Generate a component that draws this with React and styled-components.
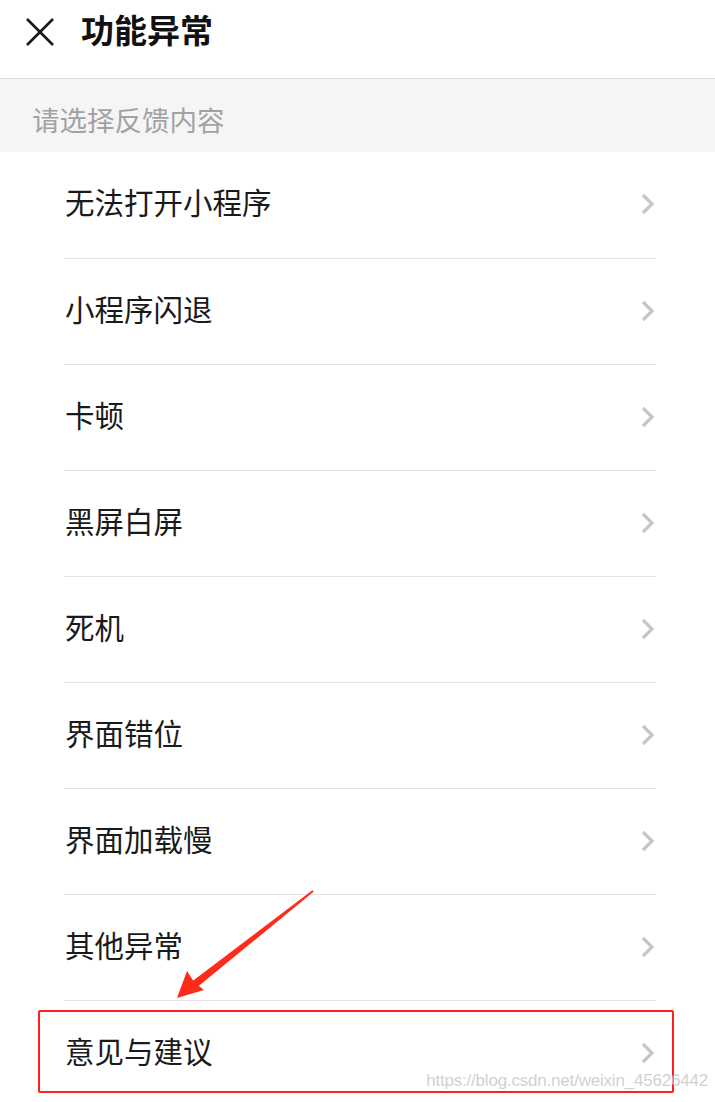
import React from "react";
import styled, { createGlobalStyle } from "styled-components";

const Global = createGlobalStyle`
  html, body { margin: 0; padding: 0; background: #fff; }
  body { font-family: "Noto Sans CJK SC", "Noto Sans", sans-serif; }
`;

const Page = styled.div`
  position: relative;
  width: 715px;
  height: 1102px;
  overflow: hidden;
  background: #fff;
`;

const Header = styled.div`
  height: 78px;
  display: flex;
  align-items: center;
  border-bottom: 1px solid #dcdcdc;
  box-sizing: content-box;
`;

const CloseBtn = styled.div`
  width: 28px;
  height: 28px;
  margin-left: 26px;
  margin-right: 27px;
  margin-top: -14px;
  display: flex;
`;

const Title = styled.h1`
  margin: 0;
  margin-top: -20px;
  font-size: 33px;
  font-weight: 700;
  color: #111;
  letter-spacing: 0;
`;

const Section = styled.div`
  height: 73px;
  background: #f5f5f5;
  display: flex;
  align-items: center;
  padding-left: 32px;
`;

const SectionLabel = styled.span`
  font-size: 27.5px;
  color: #a2a2a2;
  margin-top: 6px;
`;

const List = styled.div`
  display: flex;
  flex-direction: column;
`;

const Row = styled.div`
  height: 106px;
  margin: 0 59px 0 64px;
  display: flex;
  align-items: center;
  justify-content: space-between;
  border-top: ${(p) => (p.$first ? "none" : "1px solid #e4e4e4")};
  box-sizing: border-box;
`;

const RowText = styled.span`
  font-size: 29.5px;
  color: #1a1a1a;
  margin-left: 1px;
  margin-top: -8px;
`;

const Chevron = styled.svg`
  width: 16px;
  height: 24px;
  margin-top: -2px;
`;

const Highlight = styled.div`
  position: absolute;
  left: 38px;
  top: 1010px;
  width: 636px;
  height: 83px;
  border: 2.5px solid #ff1f1f;
  border-radius: 2px;
  box-sizing: border-box;
`;

const ArrowSvg = styled.svg`
  position: absolute;
  left: 0;
  top: 0;
  width: 715px;
  height: 1102px;
  pointer-events: none;
`;

const Watermark = styled.span`
  position: absolute;
  right: 7px;
  top: 1071px;
  font-family: "Liberation Sans", Arial, sans-serif;
  font-size: 17px;
  color: rgba(200, 200, 200, 0.85);
  letter-spacing: -0.2px;
`;

const items = [
  "无法打开小程序",
  "小程序闪退",
  "卡顿",
  "黑屏白屏",
  "死机",
  "界面错位",
  "界面加载慢",
  "其他异常",
  "意见与建议",
];

export default function App() {
  return (
    <Page>
      <Global />
      <Header>
        <CloseBtn>
          <svg width="28" height="28" viewBox="0 0 28 28">
            <path d="M1 1 L27 27 M27 1 L1 27" stroke="#1a1a1a" strokeWidth="2.6" fill="none" />
          </svg>
        </CloseBtn>
        <Title>功能异常</Title>
      </Header>
      <Section>
        <SectionLabel>请选择反馈内容</SectionLabel>
      </Section>
      <List>
        {items.map((t, i) => (
          <Row key={t} $first={i === 0}>
            <RowText>{t}</RowText>
            <Chevron viewBox="0 0 16 24">
              <path d="M3 3 L12 12 L3 21" stroke="#c7c7c7" strokeWidth="3.2" fill="none" />
            </Chevron>
          </Row>
        ))}
      </List>
      <Highlight />
      <ArrowSvg viewBox="0 0 715 1102">
        <path d="M313.6 891.8 L312.4 890.2 L192.6 981 L197.4 987 Z" fill="#ff2a1a" />
        <path d="M177 998 L187 971 L194 982 L204 990 Z" fill="#ff2a1a" />
      </ArrowSvg>
      <Watermark>https://blog.csdn.net/weixin_45626442</Watermark>
    </Page>
  );
}
